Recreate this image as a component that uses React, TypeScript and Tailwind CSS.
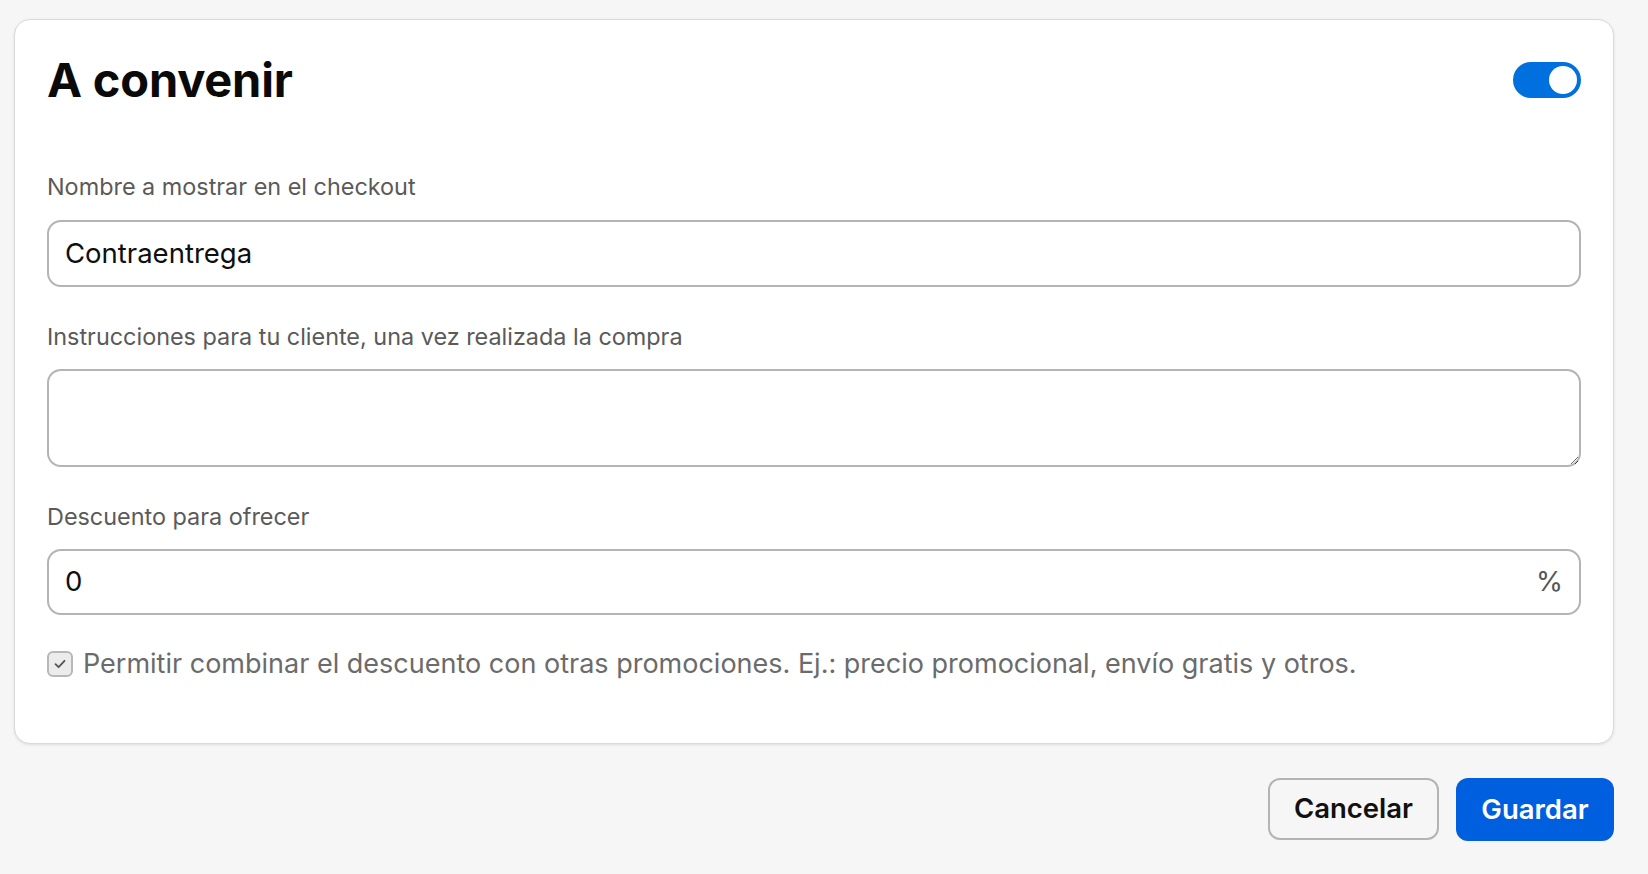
import React from "react";

export default function App() {
  return (
    <div
      className="min-h-screen bg-[#f6f6f6] pt-[19px] pl-[14px]"
      style={{ fontFamily: "Inter, 'Noto Sans', sans-serif" }}
    >
      <div className="w-[1600px]">
        <div className="bg-white border border-[#dadada] rounded-[16px] shadow-[0_1px_3px_rgba(0,0,0,0.10)] px-[32px] pt-[36px] pb-[63px]">
          <div className="flex items-center justify-between h-[48px]">
            <h1 className="text-[47px] leading-[48px] font-bold text-[#0a0a0a] tracking-[-0.2px]">A convenir</h1>
            <div className="w-[68px] h-[36px] rounded-full bg-[#0070de] flex items-center justify-end pr-[4px]">
              <div className="w-[28px] h-[28px] rounded-full bg-white" />
            </div>
          </div>

          <div className="mt-[69px]">
            <div className="text-[23.4px] leading-[28px] text-[#5a5a5a] mb-[19px]">Nombre a mostrar en el checkout</div>
            <div className="h-[67px] border-2 border-[#b4b4b4] rounded-[14px] flex items-center px-[16px]">
              <span className="text-[27.5px] text-[#0f0f0f]">Contraentrega</span>
            </div>
          </div>

          <div className="mt-[36px]">
            <div className="text-[23.4px] leading-[28px] text-[#5a5a5a] mb-[18px]">Instrucciones para tu cliente, una vez realizada la compra</div>
            <textarea className="block w-full h-[98px] border-2 border-[#b4b4b4] rounded-[14px] px-[16px] py-[12px] text-[25.6px] outline-none" />
          </div>

          <div className="mt-[36px]">
            <div className="text-[23.4px] leading-[28px] text-[#5a5a5a] mb-[18px]">Descuento para ofrecer</div>
            <div className="h-[66px] border-2 border-[#b4b4b4] rounded-[14px] flex items-center justify-between pl-[16px] pr-[16px]">
              <span className="text-[27.5px] text-[#0f0f0f]">0</span>
              <span className="text-[27.5px] text-[#555555]">%</span>
            </div>
          </div>

          <div className="mt-[33px] flex items-center gap-[10px] h-[32px]">
            <div className="w-[26px] h-[26px] rounded-[6px] border-2 border-[#b8b8b8] bg-[#ececec] flex items-center justify-center">
              <svg width="16" height="16" viewBox="0 0 16 16" fill="none">
                <path d="M3.5 8.2 L6.6 11.2 L12.5 4.8" stroke="#555" strokeWidth="1.8" strokeLinecap="round" strokeLinejoin="round" />
              </svg>
            </div>
            <span className="text-[27px] leading-[32px] text-[#6b6b6b]">
              Permitir combinar el descuento con otras promociones. Ej.: precio promocional, envío gratis y otros.
            </span>
          </div>
        </div>

        <div className="flex justify-end gap-[17px] mt-[34px]">
          <button className="w-[171px] h-[62px] rounded-[12px] border-2 border-[#b4b4b4] bg-transparent text-[27.5px] font-semibold text-[#111]">
            Cancelar
          </button>
          <button className="w-[158px] h-[63px] rounded-[12px] bg-[#005fdf] text-[27.5px] font-semibold text-white">
            Guardar
          </button>
        </div>
      </div>
    </div>
  );
}
